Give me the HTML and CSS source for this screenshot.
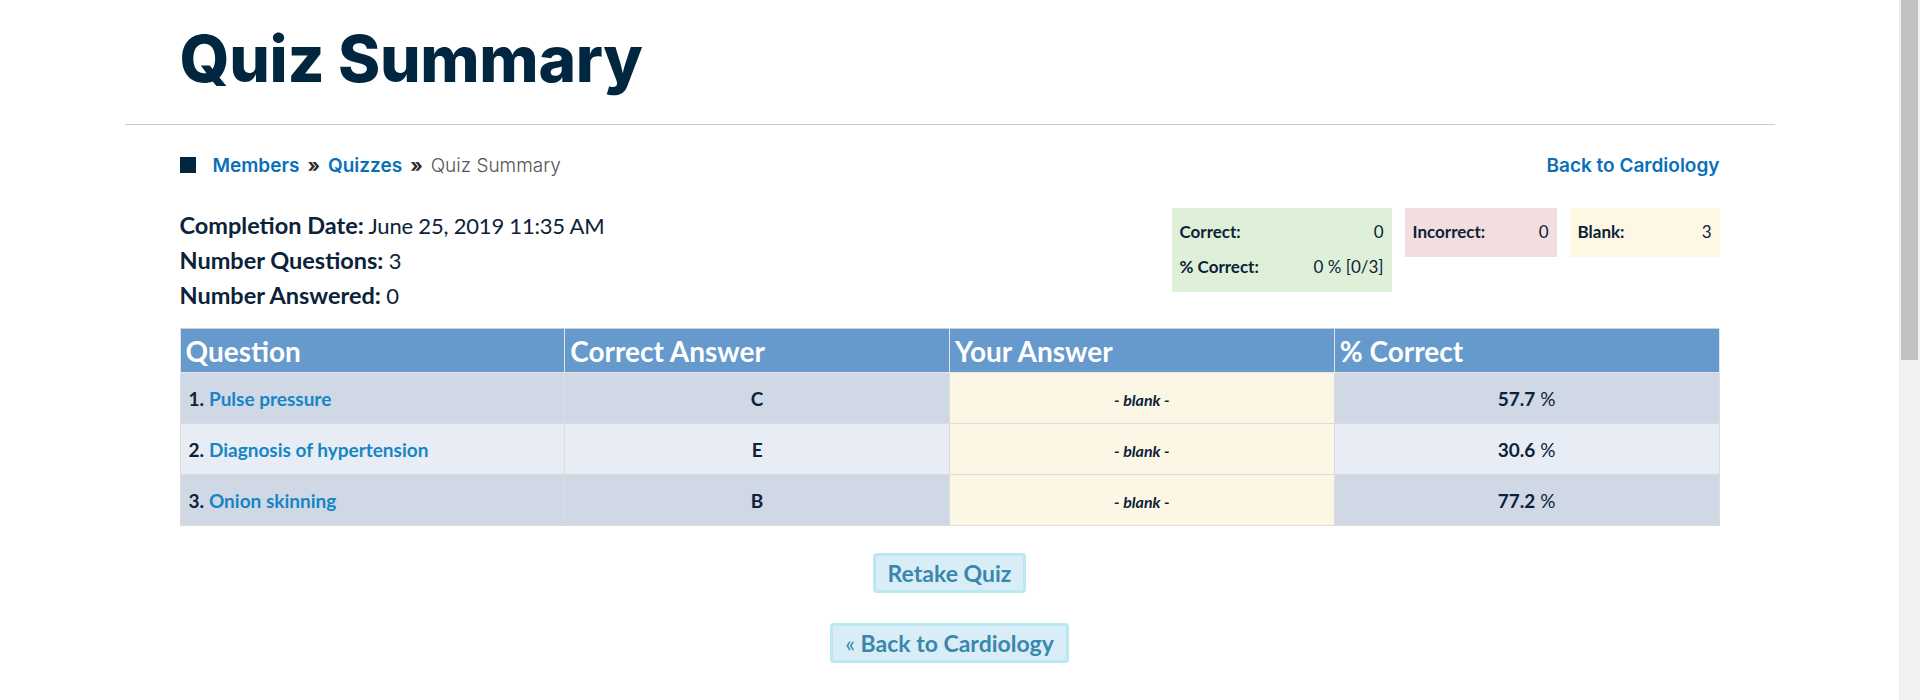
FILE: index.html
```html
<!DOCTYPE html>
<html lang="en">
<head>
<meta charset="utf-8">
<title>Quiz Summary</title>
<link rel="stylesheet" href="styles.css">
</head>
<body>
<div class="page">
  <header class="page-head">
    <h1 class="title">Quiz Summary</h1>
  </header>
  <hr class="rule">
  <main class="content">
    <nav class="crumbs">
      <div class="crumb-trail">
        <span class="crumb-mark"></span>
        <a class="crumb-link" href="#">Members</a>
        <span class="crumb-sep">&raquo;</span>
        <a class="crumb-link" href="#">Quizzes</a>
        <span class="crumb-sep">&raquo;</span>
        <span class="crumb-current">Quiz Summary</span>
      </div>
      <a class="back-link" href="#">Back to Cardiology</a>
    </nav>

    <section class="overview">
      <div class="details">
        <div class="detail"><b>Completion Date:</b> June 25, 2019 11:35 AM</div>
        <div class="detail"><b>Number Questions:</b> 3</div>
        <div class="detail"><b>Number Answered:</b> 0</div>
      </div>
      <div class="stats">
        <div class="stat stat-correct">
          <div class="stat-row"><b>Correct:</b><span>0</span></div>
          <div class="stat-row"><b>% Correct:</b><span>0 % [0/3]</span></div>
        </div>
        <div class="stat stat-incorrect">
          <div class="stat-row"><b>Incorrect:</b><span>0</span></div>
        </div>
        <div class="stat stat-blank">
          <div class="stat-row"><b>Blank:</b><span>3</span></div>
        </div>
      </div>
    </section>

    <table class="results">
      <thead>
        <tr>
          <th>Question</th>
          <th>Correct Answer</th>
          <th>Your Answer</th>
          <th>% Correct</th>
        </tr>
      </thead>
      <tbody>
        <tr class="odd">
          <td class="q"><b>1.</b> <a href="#">Pulse pressure</a></td>
          <td class="ans">C</td>
          <td class="yours"><i>- blank -</i></td>
          <td class="pct"><b>57.7</b> %</td>
        </tr>
        <tr class="even">
          <td class="q"><b>2.</b> <a href="#">Diagnosis of hypertension</a></td>
          <td class="ans">E</td>
          <td class="yours"><i>- blank -</i></td>
          <td class="pct"><b>30.6</b> %</td>
        </tr>
        <tr class="odd">
          <td class="q"><b>3.</b> <a href="#">Onion skinning</a></td>
          <td class="ans">B</td>
          <td class="yours"><i>- blank -</i></td>
          <td class="pct"><b>77.2</b> %</td>
        </tr>
      </tbody>
    </table>

    <div class="actions">
      <a class="btn" href="#">Retake Quiz</a>
      <a class="btn" href="#"><span class="laquo">&laquo;</span> Back to Cardiology</a>
    </div>
  </main>
</div>
<div class="scrollbar"><div class="scroll-thumb"></div></div>
</body>
</html>
```
FILE: styles.css
```css
html, body {
  margin: 0;
  padding: 0;
  background: #fff;
  overflow: hidden;
}
body {
  font-family: Lato, "Liberation Sans", sans-serif;
  color: #0b2239;
}
.page {
  width: 1899px;
  display: flex;
  flex-direction: column;
  align-items: center;
}
.page-head {
  width: 1540px;
  padding-top: 21px;
}
.title {
  margin: 0;
  font-family: Inter, "Open Sans", sans-serif;
  font-weight: 800;
  font-size: 64px;
  line-height: 76px;
  color: #012640;
  letter-spacing: -0.3px;
}
.rule {
  width: 1650px;
  margin: 27px 0 0;
  border: 0;
  border-top: 1px solid #cccccc;
  height: 0;
}
.content {
  width: 1540px;
  display: flex;
  flex-direction: column;
}
.crumbs {
  margin-top: 28px;
  height: 24px;
  display: flex;
  align-items: center;
  justify-content: space-between;
  font-family: Inter, "Open Sans", sans-serif;
  font-size: 19px;
}
.crumb-trail {
  display: flex;
  align-items: center;
}
.crumb-mark {
  width: 16px;
  height: 16px;
  background: #012640;
  margin-right: 17px;
}
.crumb-link, .back-link {
  color: #0a6fb8;
  font-weight: 600;
  text-decoration: none;
}
.crumb-sep {
  color: #2a2a2a;
  font-weight: 700;
  margin: 0 8px;
}
.crumb-current {
  color: #555;
  font-weight: 300;
}
.overview {
  margin-top: 31px;
  display: flex;
  justify-content: space-between;
  align-items: flex-start;
}
.details {
  font-size: 22px;
  line-height: 35px;
  font-weight: 400;
  letter-spacing: -0.2px;
  color: #0b2239;
}
.detail b {
  font-weight: 700;
  font-size: 23.5px;
  letter-spacing: 0;
}
.stats {
  display: flex;
  gap: 13px;
  align-items: flex-start;
}
.stat {
  padding: 6px 8px 8px;
  font-size: 17px;
  line-height: 35px;
}
.stat-row {
  display: flex;
  justify-content: space-between;
}
.stat-row span {
  font-weight: 400;
}
.stat-correct { background: #dff0d8; width: 204px; }
.stat-incorrect { background: #f2dede; width: 136px; }
.stat-blank { background: #fcf8e3; width: 134px; }

.results {
  margin-top: 15px;
  width: 1540px;
  border-collapse: collapse;
  border: 1px solid #cfcfcf;
  table-layout: fixed;
}
.results th {
  background: #6699cc;
  color: #fff;
  font-size: 28px;
  font-weight: 700;
  text-align: left;
  padding: 0 5px;
  height: 43px;
  border: 1px solid #e6e6e6;
  border-top: 1px solid #cfcfcf;
}
.results td {
  height: 50px;
  border: 1px solid #dcdcdc;
  font-size: 19px;
  padding: 0 8px;
}
.results tr.odd td { background: #d0d8e6; }
.results tr.even td { background: #e8edf5; }
.results tr td.yours { background: #fcf7e4; text-align: center; }
.results td.q b { font-weight: 700; }
.results td.q a {
  color: #1585c6;
  font-weight: 700;
  text-decoration: none;
}
.results td.ans {
  text-align: center;
  font-weight: 700;
}
.results td.yours i {
  font-size: 16px;
  font-weight: 700;
  font-style: italic;
}
.results td.pct {
  text-align: center;
}
.results td.pct b { font-weight: 700; }

.actions {
  margin-top: 27px;
  display: flex;
  flex-direction: column;
  align-items: center;
  gap: 30px;
}
.btn {
  display: inline-block;
  height: 34px;
  line-height: 34px;
  padding: 0 12px;
  border: 3px solid #bce8f1;
  border-radius: 4px;
  background: #d9edf7;
  color: #3a87ad;
  font-size: 23px;
  font-weight: 700;
  text-decoration: none;
}
.laquo { font-weight: 400; }

.scrollbar {
  position: fixed;
  top: 0;
  right: 0;
  width: 21px;
  height: 100%;
  background: #f1f1f1;
}
.scroll-thumb {
  margin-left: 2px;
  width: 17px;
  height: 360px;
  background: #c1c1c1;
}
```
